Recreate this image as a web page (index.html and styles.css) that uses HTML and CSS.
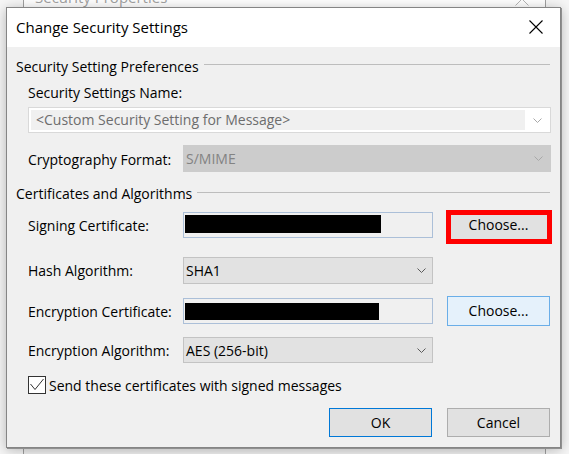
FILE: index.html
```html
<!DOCTYPE html>
<html lang="en">
<head>
<meta charset="utf-8">
<title>Change Security Settings</title>
<link rel="stylesheet" href="styles.css">
</head>
<body>
<div class="parent">
  <div class="parent-title">
    <span class="parent-name">Security Properties</span>
    <svg class="parent-icon" width="14" height="8" viewBox="0 0 14 8"><polyline points="0.5,7.5 7,1 13.5,7.5" fill="none" stroke="#b5b5b5" stroke-width="1"/></svg>
  </div>
</div>

<div class="dialog">
  <div class="titlebar">
    <span class="title">Change Security Settings</span>
    <svg class="close" width="14" height="14" viewBox="0 0 14 14"><path d="M0.5 0.5 L13.5 13.5 M13.5 0.5 L0.5 13.5" stroke="#000" stroke-width="1.1" fill="none"/></svg>
  </div>
  <div class="content">
    <div class="group-head"><span>Security Setting Preferences</span><i class="rule"></i></div>
    <div class="name-label">Security Settings Name:</div>
    <div class="name-combo">
      <div class="edit">&lt;Custom Security Setting for Message&gt;</div>
      <div class="drop"><svg width="9" height="5" viewBox="0 0 9 5"><polyline points="0.5,0.5 4.5,4.5 8.5,0.5" fill="none" stroke="#a8a8a8" stroke-width="1"/></svg></div>
    </div>
    <div class="crypto-row">
      <span class="lbl">Cryptography Format:</span>
      <div class="combo-dis"><span class="val">S/MIME</span><svg width="9" height="5" viewBox="0 0 9 5"><polyline points="0.5,0.5 4.5,4.5 8.5,0.5" fill="none" stroke="#a8a8a8" stroke-width="1"/></svg></div>
    </div>

    <div class="group-head head2"><span>Certificates and Algorithms</span><i class="rule"></i></div>

    <div class="crow r1">
      <span class="lbl">Signing Certificate:</span>
      <div class="field"><div class="redact"></div></div>
      <div class="btn-wrap">
        <button class="btn">Choose...</button>
        <span class="annot"></span>
      </div>
    </div>
    <div class="crow r2">
      <span class="lbl">Hash Algorithm:</span>
      <div class="combo"><span class="val">SHA1</span><svg width="9" height="5" viewBox="0 0 9 5"><polyline points="0.5,0.5 4.5,4.5 8.5,0.5" fill="none" stroke="#5a5a5a" stroke-width="1"/></svg></div>
    </div>
    <div class="crow r3">
      <span class="lbl">Encryption Certificate:</span>
      <div class="field"><div class="redact redact2"></div></div>
      <div class="btn-wrap">
        <button class="btn btn-hover">Choose...</button>
      </div>
    </div>
    <div class="crow r4">
      <span class="lbl">Encryption Algorithm:</span>
      <div class="combo"><span class="val">AES (256-bit)</span><svg width="9" height="5" viewBox="0 0 9 5"><polyline points="0.5,0.5 4.5,4.5 8.5,0.5" fill="none" stroke="#5a5a5a" stroke-width="1"/></svg></div>
    </div>

    <div class="check-row">
      <span class="box"><svg width="16" height="16" viewBox="0 0 16 16"><polyline points="1.5,7 6,12.5 14.5,2" fill="none" stroke="#333" stroke-width="1"/></svg></span>
      <span class="check-text">Send these certificates with signed messages</span>
    </div>

    <div class="actions">
      <button class="btn btn-default">OK</button>
      <button class="btn">Cancel</button>
    </div>
  </div>
</div>
</body>
</html>
```

FILE: styles.css
```css
* { box-sizing: border-box; }
html, body { margin: 0; padding: 0; }
body {
  width: 569px;
  height: 454px;
  overflow: hidden;
  position: relative;
  background: #f6f6f6;
  font-family: "Open Sans", "Noto Sans", "DejaVu Sans", sans-serif;
  font-size: 14px;
  color: #000;
}

/* background parent window */
.parent {
  position: absolute;
  left: 23px;
  top: -30px;
  width: 523px;
  height: 484px;
  border: 1px solid #a0a0a0;
  border-bottom: none;
  background: #f0f0f0;
}
.parent-title {
  height: 70px;
  background: #fff;
  display: flex;
  align-items: flex-start;
  padding: 16px 16px 0 11px;
}
.parent-name {
  flex: 1;
  font-size: 15px;
  line-height: 20px;
  color: #a3a3a3;
}
.parent-icon { display: block; margin-top: 11px; }

/* dialog */
.dialog {
  position: absolute;
  left: 6px;
  top: 7px;
  width: 555px;
  height: 441px;
  border: 1px solid #858585;
  background: #f0f0f0;
  box-shadow: 1px 1px 0 #8f8f8f, 0 2px 12px rgba(0, 0, 0, 0.28);
  display: flex;
  flex-direction: column;
}
.titlebar {
  height: 39px;
  flex: none;
  background: #fff;
  display: flex;
  align-items: center;
  padding: 0 17px 0 9px;
}
.title {
  flex: 1;
  font-size: 15px;
  line-height: 39px;
}
.close { display: block; margin-top: -1px; }

.content {
  flex: 1;
  display: flex;
  flex-direction: column;
  padding: 0 9px;
}

.group-head {
  display: flex;
  height: 20px;
  line-height: 20px;
  margin-top: 10px;
}
.group-head .rule {
  flex: 1;
  height: 0;
  margin: 7px 1px 0 5px;
  border-top: 1px solid #bdbdbd;
}
.head2 { margin-top: 12px; }
.head2 .rule { margin-top: 8px; }

.name-label {
  margin-top: 6px;
  padding-left: 12px;
  line-height: 20px;
}
.name-combo {
  margin: 4px 0 0 12px;
  height: 26px;
  display: flex;
  border: 1px solid #d9d9d9;
  background: #fff;
  padding: 2px 0 2px 2px;
}
.name-combo .edit {
  flex: 1;
  background: #f0f0f0;
  color: #6d6d6d;
  line-height: 20px;
  padding-left: 5px;
  white-space: nowrap;
}
.name-combo .drop {
  width: 25px;
  display: flex;
  align-items: center;
  justify-content: center;
}
.name-combo .drop svg { display: block; }

.lbl {
  width: 155px;
  flex: none;
  white-space: nowrap;
}

.crypto-row {
  margin-top: 12px;
  height: 27px;
  display: flex;
  align-items: center;
  padding-left: 12px;
}
.crypto-row .lbl { padding-top: 1px; }
.combo-dis {
  flex: 1;
  height: 27px;
  background: #cccccc;
  color: #838383;
  display: flex;
  align-items: center;
  padding: 0 8px 0 3px;
}
.combo-dis .val, .combo .val { flex: 1; }
.combo-dis svg, .combo svg { display: block; }

.crow {
  display: flex;
  align-items: center;
  padding-left: 12px;
}
.r1 { margin-top: 6px; height: 30px; }
.r2 { margin-top: 17px; height: 27px; }
.r3 { margin-top: 12px; height: 30px; }
.r4 { margin-top: 11px; height: 26px; }

.field {
  width: 250px;
  height: 26px;
  flex: none;
  border: 1px solid #abbfd8;
  background: #f0f0f0;
  padding: 2px 0 0 1px;
}
.redact { width: 196px; height: 18px; background: #000; }
.redact2 { width: 194px; height: 17px; margin-top: 2px; }

.combo {
  width: 250px;
  height: 100%;
  flex: none;
  border: 1px solid #c3c3c3;
  background: #e2e2e2;
  display: flex;
  align-items: center;
  padding: 0 6px 0 2px;
}

.btn-wrap {
  position: relative;
  margin-left: 14px;
  display: flex;
}
.btn {
  width: 103px;
  height: 30px;
  border: 1px solid #adadad;
  background: #e1e1e1;
  font: inherit;
  color: #000;
  padding: 0;
  margin: 0;
  line-height: 26px;
}
.btn-hover {
  background: #e5f1fb;
  border-color: #6aaee8;
}
.annot {
  position: absolute;
  left: -1px;
  top: 0;
  width: 106px;
  height: 34px;
  border: 5px solid #ff0000;
  pointer-events: none;
}

.check-row {
  margin-top: 12px;
  height: 20px;
  display: flex;
  align-items: flex-start;
  padding-left: 12px;
}
.box {
  width: 18px;
  height: 18px;
  margin-top: 1px;
  border: 1px solid #333;
  background: #fff;
  flex: none;
}
.box svg { display: block; }
.check-text {
  margin-left: 3px;
  line-height: 20px;
  padding-top: 1px;
  white-space: nowrap;
}

.actions {
  margin-top: 13px;
  display: flex;
  justify-content: flex-end;
  gap: 15px;
  padding-right: 1px;
}
.actions .btn { height: 29px; }
.btn-default { border-color: #0078d7; }
```
